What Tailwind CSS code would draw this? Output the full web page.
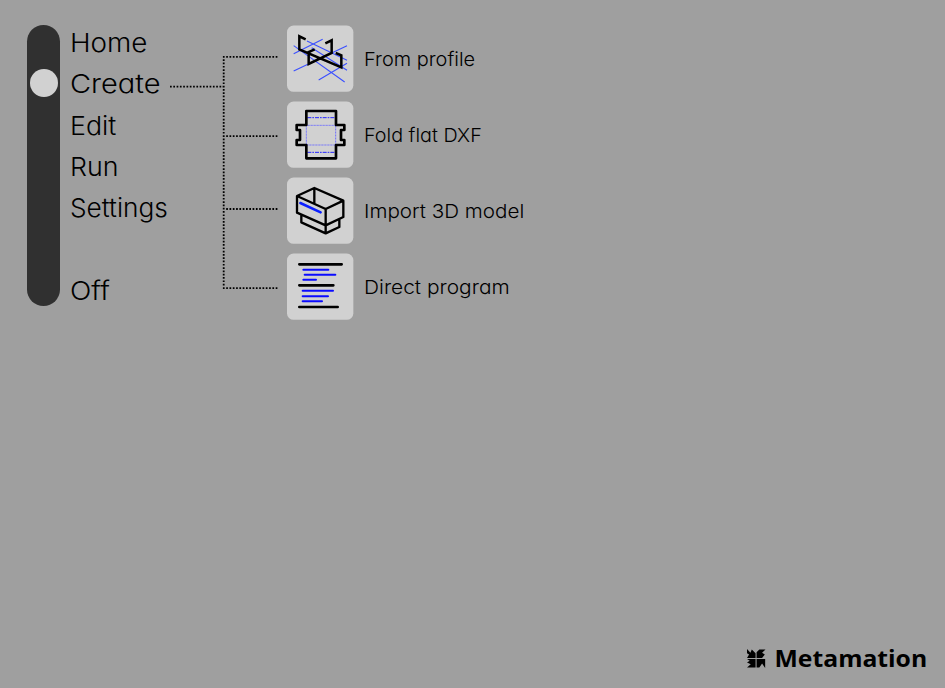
<!DOCTYPE html>
<html lang="en">
<head>
<meta charset="utf-8">
<title>Metamation</title>
<script src="https://cdn.jsdelivr.net/npm/@tailwindcss/browser@4"></script>
</head>
<body class="bg-[#9f9f9f] text-black font-['Century_Gothic','Inter',sans-serif] [font-feature-settings:'cv11']">
<div class="h-[688px] w-[945px] flex flex-col justify-between overflow-hidden">
  <main class="flex items-start pt-[25px] pl-[27px]">
    <div class="w-[33px] h-[281px] rounded-full bg-[#303030] flex justify-center pt-[44px] shrink-0">
      <div class="size-[28px] rounded-full bg-[#d1d1d1]"></div>
    </div>
    <nav class="w-[100px] ml-[10px] -mt-[3px] shrink-0 text-[26px] font-light leading-[41.25px] whitespace-nowrap">
      <div class="h-[41.25px]"><span class="inline-block origin-left scale-x-[1.07]">Home</span></div>
      <div class="h-[41.25px]"><span class="inline-block origin-left scale-x-[1.115]">Create</span></div>
      <div class="h-[41.25px]"><span class="inline-block origin-left scale-x-[1.03]">Edit</span></div>
      <div class="h-[41.25px]"><span class="inline-block origin-left scale-x-[1.03]">Run</span></div>
      <div class="h-[82.5px]"><span class="inline-block origin-left scale-x-[1.01]">Settings</span></div>
      <div class="h-[41.25px]"><span class="inline-block origin-left scale-x-[1.08]">Off</span></div>
    </nav>
    <svg class="w-[117px] h-[294px] shrink-0" viewBox="170 25 117 294" fill="none" stroke="#000" stroke-width="1.8" stroke-dasharray="1.7 1.6">
      <path d="M170 86.6H223M222.9 56.8H278M226.2 136.2H278M226.2 209H278M222.9 288.2H278"/>
      <path d="M223.7 59.3V287"/>
    </svg>
    <ul class="flex flex-col gap-[9px] text-[19px] font-[360] leading-[70px] whitespace-nowrap">
      <li class="flex gap-[9.5px] h-[67px]">
        <svg class="size-[67px]" viewBox="21 15 201 201" fill="none">
          <rect x="21" y="16.5" width="199" height="199" rx="20" fill="#d1d1d1"/>
          <path d="M41 77L194 186M41 101L128 58M81 63L201 121M41 153L201 77M95 83L201 151M116 180L201 130" stroke="#3b50ff" stroke-width="3.3"/>
          <path d="M77 58L58 49V88L184 142V106L167 99M136 70L155 61V99L86 132V96L104 88" stroke="#000" stroke-width="7.5"/>
        </svg><span class="inline-block origin-left scale-x-[1.05]">From profile</span>
      </li>
      <li class="flex gap-[9.5px] h-[67px]">
        <svg class="size-[67px]" viewBox="21 15 201 201" fill="none">
          <rect x="21" y="16.5" width="199" height="199" rx="20" fill="#d1d1d1"/>
          <path d="M79 88H167V147H79Z" stroke="#6d6dff" stroke-width="3" stroke-dasharray="3 1.5"/>
          <path d="M82 65H165M82 169H165" stroke="#2525ff" stroke-width="3" stroke-dasharray="12 3 5 3"/>
          <path d="M79 45H168V87H193V102H183V132H193V147H168V187H79V147H50V132H60V102H50V87H79Z" stroke="#000" stroke-width="8" stroke-linejoin="round"/>
        </svg><span class="inline-block origin-left scale-x-[1.04]">Fold flat DXF</span>
      </li>
      <li class="flex gap-[9.5px] h-[67px]">
        <svg class="size-[67px]" viewBox="21 15 201 201" fill="none">
          <rect x="21" y="16.5" width="199" height="199" rx="20" fill="#d1d1d1"/>
          <path d="M51 72L103 48L190 86V135L137 160L51 122ZM51 72L137 111L190 86M137 111V184M103 48V95M64 129V151L137 184L178 165V142" stroke="#000" stroke-width="7" stroke-linejoin="round"/>
          <path d="M61 93L122 121" stroke="#0b1fff" stroke-width="7.5" stroke-linecap="round"/>
        </svg><span class="inline-block origin-left scale-x-[1.085]">Import 3D model</span>
      </li>
      <li class="flex gap-[9.5px] h-[67px]">
        <svg class="size-[67px]" viewBox="21 15 201 201" fill="none" stroke-linecap="round">
          <rect x="21" y="16.5" width="199" height="199" rx="20" fill="#d1d1d1"/>
          <path d="M58 49H185M58 112H160M58 177H173" stroke="#000" stroke-width="8"/>
          <path d="M70 65H145M74 80H166M70 95H108M68 128H159M68 145H144M68 160H126" stroke="#0b0bff" stroke-width="6"/>
        </svg><span class="inline-block origin-left scale-x-[1.1]">Direct program</span>
      </li>
    </ul>
  </main>
  <footer class="flex items-center justify-end gap-[13px] pr-[18px] pb-[14px]">
    <svg class="w-[18.5px] h-[19px]" viewBox="22 14 54 55" fill="#000">
      <path d="M22 14L32 25L36 15L47 26V40H22L28 30L22 26ZM50 40V23L58 15H76L66 25L74 30L66 40ZM22 43H47V68H22L33 58L22 53L30 48ZM50 43H75V69L66 56L58 68H50Z"/>
    </svg>
    <span class="inline-block origin-right scale-x-[1.03] font-['Open_Sans',sans-serif] font-bold text-[24px] leading-[32px]">Metamation</span>
  </footer>
</div>
</body>
</html>
